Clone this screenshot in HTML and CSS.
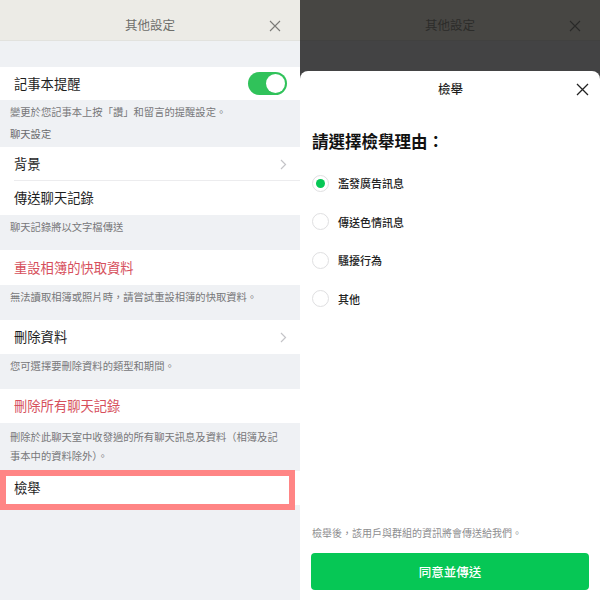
FILE: index.html
```html
<!DOCTYPE html>
<html lang="zh-Hant">
<head>
<meta charset="utf-8">
<title>其他設定 / 檢舉</title>
<link rel="stylesheet" href="styles.css">
</head>
<body>
<div class="screen">
  <section class="panel settings">
    <header class="topbar">
      <span class="topbar-title">其他設定</span>
      <svg class="topbar-close" width="12" height="12" viewBox="0 0 12 12"><path d="M1 1L11 11M11 1L1 11" stroke="#7b7b78" stroke-width="1.1" fill="none"/></svg>
    </header>
    <div class="spacer"></div>
    <div class="row row-first">
      <span class="row-label">記事本提醒</span>
      <span class="toggle"></span>
    </div>
    <div class="caption caption-group">
      <p>變更於您記事本上按「讚」和留言的提醒設定。</p>
      <p class="group-title">聊天設定</p>
    </div>
    <div class="row row-divided">
      <span class="row-label">背景</span>
      <svg class="chevron" width="7" height="11" viewBox="0 0 7 11"><path d="M1 1l4.5 4.5L1 10" stroke="#c4c4c8" stroke-width="1.2" fill="none"/></svg>
    </div>
    <div class="row">
      <span class="row-label">傳送聊天記錄</span>
    </div>
    <div class="caption"><p>聊天記錄將以文字檔傳送</p></div>
    <div class="row row-tall">
      <span class="row-label danger">重設相簿的快取資料</span>
    </div>
    <div class="caption"><p>無法讀取相簿或照片時，請嘗試重設相簿的快取資料。</p></div>
    <div class="row">
      <span class="row-label">刪除資料</span>
      <svg class="chevron" width="7" height="11" viewBox="0 0 7 11"><path d="M1 1l4.5 4.5L1 10" stroke="#c4c4c8" stroke-width="1.2" fill="none"/></svg>
    </div>
    <div class="caption"><p>您可選擇要刪除資料的類型和期間。</p></div>
    <div class="row">
      <span class="row-label danger">刪除所有聊天記錄</span>
    </div>
    <div class="caption caption-two"><p>刪除於此聊天室中收發過的所有聊天訊息及資料（相簿及記事本中的資料除外）。</p></div>
    <div class="row row-report">
      <span class="row-label">檢舉</span>
    </div>
  </section>

  <section class="panel report">
    <header class="topbar dim">
      <span class="topbar-title">其他設定</span>
      <svg class="topbar-close" width="12" height="12" viewBox="0 0 12 12"><path d="M1 1L11 11M11 1L1 11" stroke="#2a2a29" stroke-width="1.1" fill="none"/></svg>
    </header>
    <div class="dim-gap"></div>
    <div class="sheet">
      <div class="sheet-head">
        <span class="sheet-title">檢舉</span>
        <svg class="sheet-close" width="13" height="13" viewBox="0 0 13 13"><path d="M1 1L12 12M12 1L1 12" stroke="#222" stroke-width="1.3" fill="none"/></svg>
      </div>
      <h1 class="sheet-heading">請選擇檢舉理由：</h1>
      <ul class="reasons">
        <li class="reason"><span class="radio checked"></span><span>濫發廣告訊息</span></li>
        <li class="reason"><span class="radio"></span><span>傳送色情訊息</span></li>
        <li class="reason"><span class="radio"></span><span>騷擾行為</span></li>
        <li class="reason"><span class="radio"></span><span>其他</span></li>
      </ul>
      <div class="sheet-foot">
        <p class="notice">檢舉後，該用戶與群組的資訊將會傳送給我們。</p>
        <button class="submit">同意並傳送</button>
      </div>
    </div>
  </section>
</div>
</body>
</html>
```

FILE: styles.css
```css
*, *::before, *::after { box-sizing: border-box; margin: 0; padding: 0; }
html, body { width: 600px; height: 600px; overflow: hidden; }
body {
  font-family: "Noto Sans CJK TC", "Noto Sans", sans-serif;
  background: #eff1f4;
  color: #1c1c1c;
}
.screen {
  display: grid;
  grid-template-columns: 300px 300px;
  height: 600px;
}
.panel {
  display: flex;
  flex-direction: column;
  height: 600px;
}
.settings { background: #eff1f4; }

.topbar {
  height: 41px;
  flex: none;
  background: #ecebe6;
  border-bottom: 1px solid #e2e2de;
  display: flex;
  align-items: center;
  justify-content: center;
  position: relative;
}
.topbar-title {
  font-size: 12.5px;
  color: #6e6e6b;
  line-height: 1;
  margin-top: 11px;
}
.topbar-close {
  position: absolute;
  right: 19px;
  top: 20px;
}
.spacer { height: 26px; flex: none; }

.row {
  height: 34px;
  flex: none;
  background: #fff;
  display: flex;
  align-items: center;
  justify-content: space-between;
  padding: 0 13px 0 14px;
  position: relative;
}
.row-first { height: 33px; }
.row-tall { height: 35px; }
.row-divided::after {
  content: "";
  position: absolute;
  left: 14px;
  right: 0;
  bottom: 0;
  height: 1px;
  background: #ececee;
}
.row-label {
  font-size: 13.3px;
  line-height: 1;
  color: #1e1e1e;
}
.row-label.danger { color: #d6505c; }

.toggle {
  width: 39px;
  height: 23px;
  border-radius: 12px;
  background: #30c25a;
  position: relative;
}
.toggle::after {
  content: "";
  position: absolute;
  right: 2px;
  top: 2px;
  width: 19px;
  height: 19px;
  border-radius: 50%;
  background: #fff;
}

.caption {
  flex: none;
  height: 35px;
  padding: 3px 14px 0 10px;
  font-size: 10.3px;
  line-height: 18px;
  color: #777779;
}
.caption-group { height: 47px; }
.caption-group .group-title { margin-top: 4px; color: #6a6a6c; }
.caption-two { height: 48px; line-height: 19px; padding-top: 4px; }

.row-report::after {
  content: "";
  position: absolute;
  left: 0;
  top: -1px;
  width: 295px;
  height: 40px;
  border: 6px solid #ff8585;
}

/* right panel */
.report { background: #434344; }
.topbar.dim {
  background: #474643;
  border-bottom-color: #414140;
}
.topbar.dim .topbar-title { color: #2c2c2a; }
.dim-gap { height: 30px; flex: none; }

.sheet {
  flex: 1;
  background: #fff;
  border-radius: 8px 8px 0 0;
  display: flex;
  flex-direction: column;
  padding: 0 11px 10px 12px;
}
.sheet-head {
  height: 36px;
  flex: none;
  display: flex;
  align-items: center;
  justify-content: center;
  position: relative;
}
.sheet-title {
  font-size: 12.5px;
  font-weight: 500;
  color: #1c1c1c;
  line-height: 1;
}
.sheet-close {
  position: absolute;
  right: 0;
  top: 12px;
}
.sheet-heading {
  margin-top: 22px;
  font-size: 16.5px;
  line-height: 24px;
  font-weight: 700;
  color: #111;
}
.reasons {
  list-style: none;
  margin-top: 11px;
}
.reason {
  height: 38.5px;
  display: flex;
  align-items: center;
  gap: 9px;
  font-size: 11px;
  font-weight: 500;
  color: #222;
}
.radio {
  width: 17px;
  height: 17px;
  border-radius: 50%;
  border: 1px solid #dfdfe1;
  display: flex;
  align-items: center;
  justify-content: center;
}
.radio.checked::after {
  content: "";
  width: 9px;
  height: 9px;
  border-radius: 50%;
  background: #06c755;
}
.sheet-foot {
  margin-top: auto;
  display: flex;
  flex-direction: column;
  gap: 12px;
}
.notice {
  font-size: 10px;
  line-height: 16px;
  color: #8d8d8f;
}
.submit {
  height: 37px;
  width: 278px;
  margin-left: -1px;
  border: none;
  border-radius: 4px;
  background: #06c755;
  color: #fff;
  font-family: inherit;
  font-size: 12.5px;
  font-weight: 500;
}
```
